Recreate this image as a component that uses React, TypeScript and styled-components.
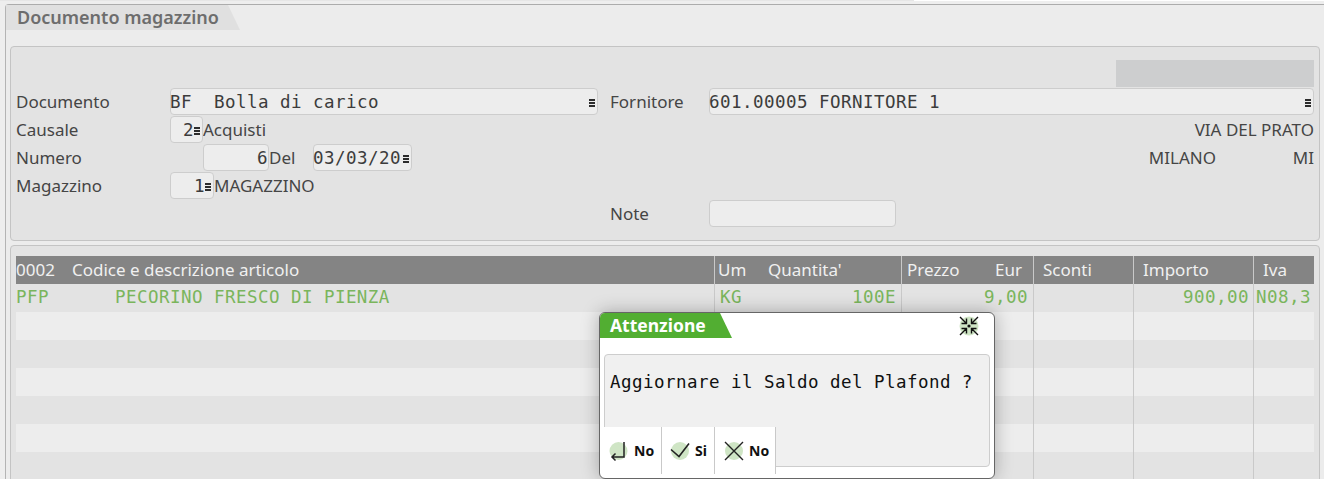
import React from "react";
import styled, { createGlobalStyle } from "styled-components";

const GlobalStyle = createGlobalStyle`
  html, body {
    margin: 0;
    padding: 0;
    background: #eeeeee;
    overflow: hidden;
  }
  body {
    font-family: "Noto Sans", "Open Sans", sans-serif;
    color: #454545;
  }
`;

const mono = `"DejaVu Sans Mono", "Liberation Mono", monospace`;

const Page = styled.div`
  position: relative;
  width: 1324px;
  height: 479px;
  overflow: hidden;
  padding: 4px 0 0 5px;
  box-sizing: border-box;
  background: linear-gradient(90deg, #e6e6e6 914px, #fff 914px) top / 100% 1px no-repeat, #eeeeee;
`;

const Frame = styled.div`
  height: 500px;
  background: #ececec;
  border-top: 1px solid #acacac;
  border-left: 1px solid #b4b4b4;
  border-top-left-radius: 4px;
  box-sizing: border-box;
`;

const Tab = styled.div`
  width: 234px;
  height: 25px;
  background: #e0e0e0;
  clip-path: polygon(0 0, 222px 0, 100% 100%, 0 100%);
  font-size: 18px;
  font-weight: 600;
  line-height: 24px;
  padding-left: 11px;
  box-sizing: border-box;
  color: #6d6d6d;
  white-space: nowrap;
`;

const Panel = styled.section`
  width: 1310px;
  margin-left: 4px;
  background: #e3e3e3;
  border: 1px solid #c4c4c4;
  border-radius: 4px;
  box-sizing: border-box;
`;

const FormPanel = styled(Panel)`
  height: 195px;
  margin-top: 16px;
  padding: 13px 5px 0;
`;

const GridPanel = styled(Panel)`
  height: 300px;
  margin-top: 4px;
  padding: 10px 5px 0;
`;

const TopStrip = styled.div`
  display: flex;
  justify-content: flex-end;
  height: 28px;
`;

const StatusBox = styled.div`
  width: 198px;
  height: 27px;
  background: #cdcecf;
`;

const FormGrid = styled.div`
  display: grid;
  grid-template-columns: 594px 704px;
  grid-auto-rows: 28px;
`;

const Row = styled.div`
  display: flex;
  align-items: center;
  min-width: 0;
`;

const Label = styled.span<{ $width: number }>`
  width: ${(p) => p.$width}px;
  flex: none;
  font-size: 17px;
  line-height: 27px;
  align-self: flex-start;
  white-space: nowrap;
`;

const Plain = styled.span`
  font-size: 17px;
  line-height: 27px;
  align-self: flex-start;
  white-space: nowrap;
`;

const RightRow = styled(Row)`
  justify-content: flex-end;
`;

const RightLabel = styled(Label)`
  text-align: right;
`;

const Field = styled.div<{ $width: number; $gap?: number }>`
  position: relative;
  flex: none;
  align-self: flex-start;
  width: ${(p) => p.$width}px;
  height: 27px;
  margin-left: ${(p) => p.$gap ?? 0}px;
  display: flex;
  align-items: center;
  background: #ededed;
  border: 1px solid #cdcdcd;
  border-radius: 4px;
  box-sizing: border-box;
  font-family: ${mono};
  font-size: 17.5px;
  letter-spacing: 0.46px;
  text-indent: -1px;
  color: #3c3c3c;
  white-space: pre;
`;

const RightValue = styled.span<{ $pad: number }>`
  margin-left: auto;
  padding-right: ${(p) => p.$pad}px;
`;

const Menu = styled.i`
  position: absolute;
  right: 2px;
  top: 10px;
  width: 6px;
  height: 8px;
  background: repeating-linear-gradient(#2c2c2c 0 2px, #ededed 2px 3px);
`;

const gridCols = "698px 187px 132px 100px 120px 61px";

const HeaderRow = styled.div`
  display: grid;
  grid-template-columns: ${gridCols};
  height: 28px;
  background: #848484;
  color: #f0f0f0;
  font-size: 17px;
  line-height: 27px;
`;

const HeaderCell = styled.div<{ $pad?: number; $line?: boolean }>`
  display: flex;
  justify-content: space-between;
  padding: 0 ${(p) => (p.$line ? 11 : 0)}px 0 ${(p) => p.$pad ?? 0}px;
  border-left: ${(p) => (p.$line ? "1px solid #c9c9c9" : "none")};
  white-space: pre;
  box-sizing: border-box;
`;

const HeaderText = styled.span<{ $left?: number }>`
  margin-left: ${(p) => p.$left ?? 0}px;
`;

const HeaderGroup = styled.div`
  display: flex;
`;

const CodeHead = styled.span`
  width: 56px;
`;

const UmHead = styled.span`
  width: 50px;
`;

const DataRow = styled.div<{ $alt?: boolean }>`
  display: grid;
  grid-template-columns: ${gridCols};
  height: 28px;
  background: ${(p) => (p.$alt ? "#ededed" : "transparent")};
  color: #7ab55c;
  font-family: ${mono};
  font-size: 17.5px;
  letter-spacing: 0.46px;
  line-height: 27px;
`;

const DataCell = styled.div<{ $line?: boolean; $right?: number; $left?: number }>`
  display: flex;
  justify-content: ${(p) => (p.$right !== undefined ? "flex-end" : "flex-start")};
  padding-right: ${(p) => p.$right ?? 0}px;
  padding-left: ${(p) => p.$left ?? 0}px;
  border-left: ${(p) => (p.$line ? "1px solid #c9c9c9" : "none")};
  white-space: pre;
  box-sizing: border-box;
`;

const SplitCell = styled(DataCell)`
  justify-content: space-between;
`;

const Dialog = styled.div`
  position: absolute;
  left: 599px;
  top: 312px;
  width: 396px;
  height: 167px;
  background: #fff;
  border: 1px solid #666;
  border-radius: 6px;
  box-sizing: border-box;
  box-shadow: 0 0 18px rgba(0, 0, 0, 0.28);
  padding: 0 4px;
`;

const DialogHead = styled.div`
  display: flex;
  justify-content: space-between;
  height: 41px;
  margin: 0 -4px;
`;

const DialogTab = styled.div`
  width: 132px;
  height: 25px;
  background: #52ae32;
  clip-path: polygon(0 0, 120px 0, 100% 100%, 0 100%);
  color: #fff;
  font-size: 17.5px;
  font-weight: 700;
  line-height: 24px;
  padding-left: 10px;
  box-sizing: border-box;
  border-top-left-radius: 5px;
  white-space: nowrap;
`;

const CollapseButton = styled.button`
  width: 22px;
  height: 22px;
  margin: 2px 14px 0 0;
  padding: 0;
  border: none;
  background: none;
  display: block;
`;

const MessageBox = styled.div`
  position: relative;
  height: 113px;
  width: 386px;
  background: #f0f0f0;
  border: 1px solid #cdcdcd;
  border-radius: 4px;
  box-sizing: border-box;
  padding-left: 5px;
  padding-top: 17px;
  font-family: ${mono};
  font-size: 17.5px;
  letter-spacing: 0.46px;
  line-height: 20px;
  color: #111;
  white-space: pre;
`;

const ButtonBar = styled.div`
  position: absolute;
  left: -1px;
  top: 72px;
  display: flex;
  height: 47px;
  background: #fff;
`;

const ActionButton = styled.button<{ $width: number; $pad: number }>`
  width: ${(p) => p.$width}px;
  height: 100%;
  display: flex;
  align-items: center;
  gap: 5px;
  padding: 0 0 0 ${(p) => p.$pad}px;
  background: #fff;
  border: none;
  border-right: 1px solid #c9c9c9;
  box-sizing: border-box;
  font-family: "Noto Sans", sans-serif;
  font-size: 14px;
  font-weight: 700;
  letter-spacing: 0;
  color: #111;
`;

const BackIcon = () => (
  <svg width="20" height="20" viewBox="0 0 20 20">
    <circle cx="9.500" cy="10" r="9" fill="#cfe5c5" />
    <path d="M15 1v15H3M6.500 12.500L3 16l3.500 3.500" fill="none" stroke="#222" strokeWidth="1.500" />
  </svg>
);

const CheckIcon = () => (
  <svg width="20" height="20" viewBox="0 0 20 20">
    <circle cx="10" cy="10" r="9" fill="#cfe5c5" />
    <path d="M1 8.500l8 7L19 2.500" fill="none" stroke="#222" strokeWidth="1.600" />
  </svg>
);

const CrossIcon = () => (
  <svg width="20" height="20" viewBox="0 0 20 20">
    <circle cx="10" cy="10" r="9" fill="#cfe5c5" />
    <path d="M1 1l18 18M19 1L1 19" fill="none" stroke="#222" strokeWidth="1.400" />
  </svg>
);

const CollapseIcon = () => (
  <svg width="22" height="22" viewBox="0 0 22 22">
    <circle cx="11" cy="11" r="9.500" fill="#cfe5c5" />
    <circle cx="11" cy="11" r="1.600" fill="#111" />
    <path
      d="M2 2l6 6M8.500 3.500V8.500H3.500M20 2l-6 6M13.500 3.500V8.500h5M2 20l6-6M8.500 18.500V13.500H3.500M20 20l-6-6M13.500 18.500V13.500h5"
      fill="none"
      stroke="#111"
      strokeWidth="1.400"
    />
  </svg>
);

const emptyRows = [true, false, true, false, true, false];

export default function App() {
  return (
    <Page>
      <GlobalStyle />
      <Frame>
        <Tab>Documento magazzino</Tab>
        <FormPanel>
          <TopStrip>
            <StatusBox />
          </TopStrip>
          <FormGrid>
            <Row>
              <Label $width={154}>Documento</Label>
              <Field $width={428}>
                {"BF  Bolla di carico"}
                <Menu />
              </Field>
            </Row>
            <Row>
              <Label $width={99}>Fornitore</Label>
              <Field $width={605}>
                601.00005 FORNITORE 1
                <Menu />
              </Field>
            </Row>
            <Row>
              <Label $width={154}>Causale</Label>
              <Field $width={33}>
                <RightValue $pad={8}>2</RightValue>
                <Menu />
              </Field>
              <Plain>Acquisti</Plain>
            </Row>
            <RightRow>
              <Plain>VIA DEL PRATO</Plain>
            </RightRow>
            <Row>
              <Label $width={154}>Numero</Label>
              <Field $width={66} $gap={33}>
                <RightValue $pad={0}>6</RightValue>
              </Field>
              <Label $width={44}>Del</Label>
              <Field $width={99}>
                03/03/20
                <Menu />
              </Field>
            </Row>
            <RightRow>
              <Plain>MILANO</Plain>
              <RightLabel $width={98}>MI</RightLabel>
            </RightRow>
            <Row>
              <Label $width={154}>Magazzino</Label>
              <Field $width={44}>
                <RightValue $pad={8}>1</RightValue>
                <Menu />
              </Field>
              <Plain>MAGAZZINO</Plain>
            </Row>
            <Row />
            <Row />
            <Row>
              <Label $width={99}>Note</Label>
              <Field $width={187} />
            </Row>
          </FormGrid>
        </FormPanel>
        <GridPanel>
          <HeaderRow>
            <HeaderCell>
              <HeaderGroup>
                <CodeHead>0002</CodeHead>
                <span>Codice e descrizione articolo</span>
              </HeaderGroup>
            </HeaderCell>
            <HeaderCell $line $pad={3}>
              <HeaderGroup>
                <UmHead>Um</UmHead>
                <span>Quantita'</span>
              </HeaderGroup>
            </HeaderCell>
            <HeaderCell $line $pad={5}>
              <span>Prezzo</span>
              <span>Eur</span>
            </HeaderCell>
            <HeaderCell $line>
              <HeaderText $left={9}>Sconti</HeaderText>
            </HeaderCell>
            <HeaderCell $line>
              <HeaderText $left={9}>Importo</HeaderText>
            </HeaderCell>
            <HeaderCell $line>
              <HeaderText $left={9}>Iva</HeaderText>
            </HeaderCell>
          </HeaderRow>
          <DataRow>
            <DataCell>{"PFP      PECORINO FRESCO DI PIENZA"}</DataCell>
            <SplitCell $line $left={5} $right={5}>
              <span>KG</span>
              <span>100E</span>
            </SplitCell>
            <DataCell $line $right={5}>9,00</DataCell>
            <DataCell $line />
            <DataCell $line $right={4}>900,00</DataCell>
            <DataCell $line $left={2}>N08,3</DataCell>
          </DataRow>
          {emptyRows.map((alt, i) => (
            <DataRow key={i} $alt={alt}>
              <DataCell />
              <DataCell $line />
              <DataCell $line />
              <DataCell $line />
              <DataCell $line />
              <DataCell $line />
            </DataRow>
          ))}
        </GridPanel>
      </Frame>
      <Dialog>
        <DialogHead>
          <DialogTab>Attenzione</DialogTab>
          <CollapseButton>
            <CollapseIcon />
          </CollapseButton>
        </DialogHead>
        <MessageBox>
          Aggiornare il Saldo del Plafond ?
          <ButtonBar>
            <ActionButton $width={58} $pad={5}>
              <BackIcon />
              No
            </ActionButton>
            <ActionButton $width={53} $pad={8}>
              <CheckIcon />
              Si
            </ActionButton>
            <ActionButton $width={61} $pad={9}>
              <CrossIcon />
              No
            </ActionButton>
          </ButtonBar>
        </MessageBox>
      </Dialog>
    </Page>
  );
}
